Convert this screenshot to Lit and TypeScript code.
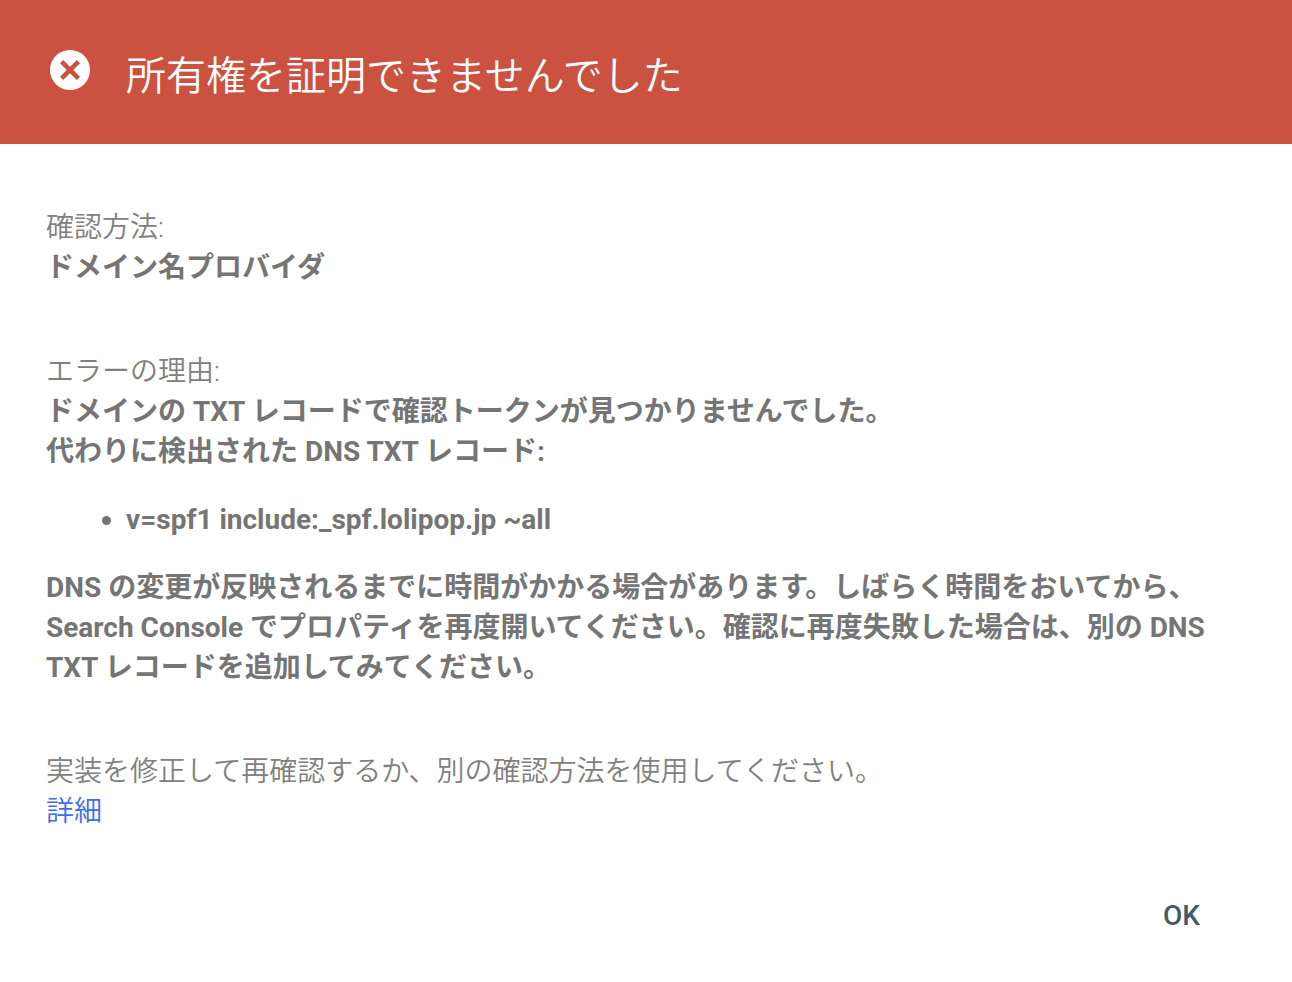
import { LitElement, html, css } from "lit";
import { customElement } from "lit/decorators.js";

@customElement("app-root")
export class AppRoot extends LitElement {
  static styles = css`
    :host { display: block; background: #fff; font-family: Roboto, "Noto Sans CJK JP", sans-serif; height: 982px; color: #757575; }
    .head { height: 144px; background: #cb5140; display: flex; align-items: flex-start; box-sizing: border-box; padding: 50px 0 0 50px; }
    .icon { width: 40px; height: 40px; flex: none; display: block; }
    h1 { margin: 2px 0 0 36px; font-size: 40px; line-height: 50px; font-weight: 350; color: #fff; }
    .body { padding: 64px 46px 0; font-size: 28px; line-height: 40px; }
    .sec { font-weight: 350; color: #808080; }
    b { font-weight: 700; display: block; color: #757575; }
    .mt { margin-top: 64px; }
    ul { margin: 28px 0 28px; padding: 0 0 0 80px; font-weight: 700; }
    a { color: #3b6cf0; text-decoration: none; display: block; }
    .foot { display: flex; justify-content: flex-end; padding: 64px 92px 0 0; }
    .ok { font-size: 28px; font-weight: 500; color: #455a64; line-height: 40px; }
  `;
  render() {
    return html`
      <div class="head">
        <svg class="icon" viewBox="0 0 40 40">
          <circle cx="20" cy="20" r="20" fill="#fff"></circle>
          <path d="M11.6 11.6 L28.4 28.4 M28.4 11.6 L11.6 28.4" stroke="#cb5140" stroke-width="4.6" fill="none"></path>
        </svg>
        <h1>所有権を証明できませんでした</h1>
      </div>
      <div class="body">
        <div class="sec">確認方法:<b>ドメイン名プロバイダ</b></div>
        <div class="sec mt">エラーの理由:<b>ドメインの TXT レコードで確認トークンが見つかりませんでした。</b><b>代わりに検出された DNS TXT レコード:</b></div>
        <ul><li>v=spf1 include:_spf.lolipop.jp ~all</li></ul>
        <b>DNS の変更が反映されるまでに時間がかかる場合があります。しばらく時間をおいてから、Search Console でプロパティを再度開いてください。確認に再度失敗した場合は、別の DNS TXT レコードを追加してみてください。</b>
        <div class="sec mt">実装を修正して再確認するか、別の確認方法を使用してください。<a>詳細</a></div>
      </div>
      <div class="foot"><span class="ok">OK</span></div>
    `;
  }
}
